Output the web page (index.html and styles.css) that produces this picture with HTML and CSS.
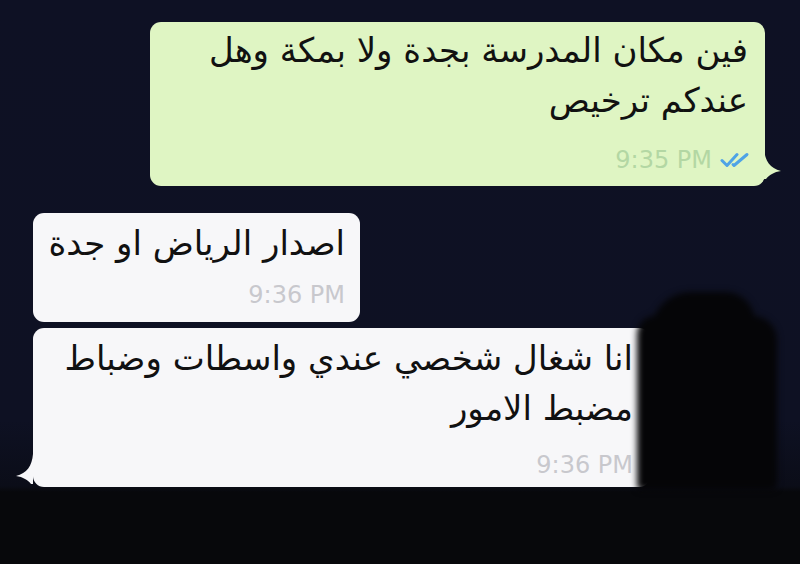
FILE: index.html
```html
<!DOCTYPE html>
<html lang="ar">
<head>
    <meta charset="UTF-8">
    <meta name="viewport" content="width=device-width, initial-scale=1.0">
    <title>محادثة</title>
    <link rel="stylesheet" href="styles.css">
</head>
<body>
    <div class="chat">
        <div class="row out">
            <div class="bubble green">
                <p class="text">فين مكان المدرسة بجدة ولا بمكة وهل<br>عندكم ترخيص</p>
                <div class="meta">
                    <span class="time">9:35 PM</span>
                    <svg class="ticks" width="30" height="16" viewBox="0 0 30 16">
                        <path d="M2 8.5 L7 13.5 L17 2.5" fill="none" stroke="#4ea3e6" stroke-width="3" stroke-linecap="round" stroke-linejoin="round"/>
                        <path d="M13 12.5 L14 13.5 L27 2.5" fill="none" stroke="#4ea3e6" stroke-width="3" stroke-linecap="round" stroke-linejoin="round"/>
                    </svg>
                </div>
                <svg class="tail tail-right" width="18" height="30" viewBox="0 0 18 30">
                    <path d="M0 0 C1 12 6 19 17 22 C10 23 5 26 2 30 L0 30 Z" fill="#dff5c3"/>
                </svg>
            </div>
        </div>

        <div class="row in">
            <div class="bubble white short">
                <p class="text">اصدار الرياض او جدة</p>
                <div class="meta">
                    <span class="time">9:36 PM</span>
                </div>
            </div>
        </div>

        <div class="row in">
            <div class="bubble white wide">
                <p class="text">انا شغال شخصي عندي واسطات وضباط<br>مضبط الامور</p>
                <div class="meta">
                    <span class="time">9:36 PM</span>
                </div>
                <svg class="tail tail-left" width="18" height="30" viewBox="0 0 18 30">
                    <path d="M18 0 C17 12 12 19 1 22 C8 23 13 26 16 30 L18 30 Z" fill="#f7f7f9"/>
                </svg>
            </div>
        </div>

        <!-- الجزء المخفي من الرسالة -->
        <div class="redact"></div>
    </div>
</body>
</html>
```

FILE: styles.css
```css
* {
    margin: 0;
    padding: 0;
    box-sizing: border-box;
}

body {
    background: linear-gradient(#0e1124 0, #0e1123 420px, #0b0d18 486px, #07080b 492px, #07080b 100%);
    min-height: 100vh;
    font-family: "DejaVu Sans", sans-serif;
    overflow: hidden;
}

.chat {
    position: relative;
    width: 800px;
    height: 564px;
    padding-top: 22px;
    display: flex;
    flex-direction: column;
}

.row {
    display: flex;
}

.row.out {
    justify-content: flex-end;
    padding-right: 35px;
    margin-bottom: 27px;
}

.row.in {
    justify-content: flex-start;
    padding-left: 33px;
    margin-bottom: 6px;
}

.bubble {
    position: relative;
    border-radius: 11px;
    direction: rtl;
}

.bubble.green {
    background: #dff5c3;
    width: 615px;
    padding: 3px 17px 14px;
}

.bubble.white {
    background: #f7f7f9;
}

.bubble.short {
    width: 327px;
    padding: 5px 15px 15px;
}

.bubble.wide {
    width: 617px;
    padding: 5px 17px 10px;
}

.text {
    font-size: 34px;
    line-height: 50px;
    color: #111;
    text-align: right;
    white-space: nowrap;
}

.meta {
    display: flex;
    align-items: center;
    justify-content: flex-end;
    direction: ltr;
    gap: 8px;
    height: 24px;
}

.green .meta {
    margin-top: 23px;
}

.short .meta {
    margin-top: 15px;
}

.wide .meta {
    margin-top: 20px;
}

.time {
    font-family: "DejaVu Sans", sans-serif;
    font-size: 24px;
    line-height: 24px;
    color: #c8c8cd;
}

.green .time {
    color: #b3d7a3;
}

.ticks {
    margin-right: -2px;
}

.tail {
    position: absolute;
}

.tail-right {
    right: -17px;
    bottom: 7px;
}

.tail-left {
    left: -18px;
    bottom: 3px;
}

.redact {
    position: absolute;
    left: 637px;
    top: 316px;
    width: 140px;
    height: 174px;
    background: #050507;
    border-radius: 18px 24px 6px 4px;
    filter: blur(3px);
}

.redact::before {
    content: "";
    position: absolute;
    left: 14px;
    top: -24px;
    width: 104px;
    height: 44px;
    background: #050507;
    border-radius: 40px 30px 0 0;
}
```
